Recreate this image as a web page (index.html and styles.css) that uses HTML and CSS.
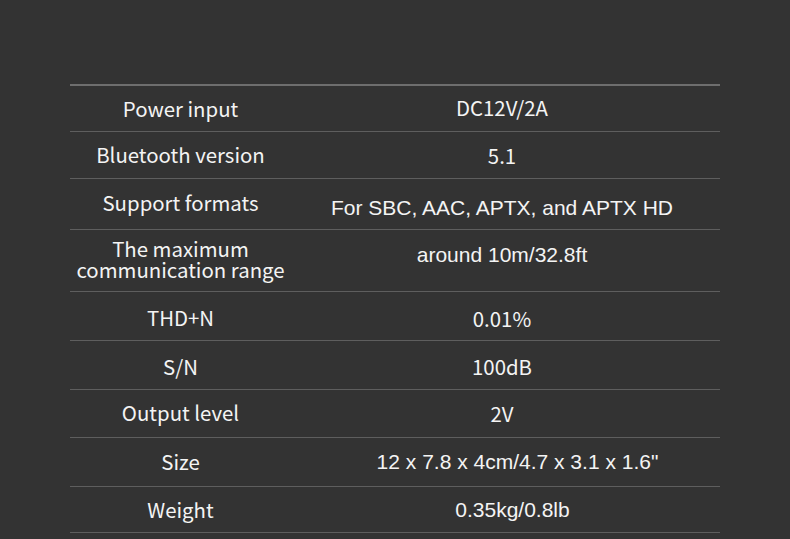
FILE: index.html
```html
<!DOCTYPE html>
<html lang="en">
<head>
<meta charset="utf-8">
<title>Specifications</title>
<link rel="stylesheet" href="styles.css">
</head>
<body>
<div class="spec">
  <div class="row r1"><div class="label">Power input</div><div class="value first">DC12V/2A</div></div>
  <div class="row r2"><div class="label">Bluetooth version</div><div class="value">5.1</div></div>
  <div class="row r3"><div class="label lift">Support formats</div><div class="value arial down">For SBC, AAC, APTX, and APTX HD</div></div>
  <div class="row r4"><div class="label two">The maximum<br>communication range</div><div class="value arial up">around 10m/32.8ft</div></div>
  <div class="row r5"><div class="label sink">THD+N</div><div class="value drop">0.01%</div></div>
  <div class="row r6"><div class="label sink">S/N</div><div class="value drop2">100dB</div></div>
  <div class="row r7"><div class="label raise">Output level</div><div class="value">2V</div></div>
  <div class="row r8"><div class="label">Size</div><div class="value arial shift-lg">12 x 7.8 x 4cm/4.7 x 3.1 x 1.6"</div></div>
  <div class="row r9"><div class="label">Weight</div><div class="value arial shift-sm">0.35kg/0.8lb</div></div>
</div>
</body>
</html>
```
FILE: styles.css
```css
html, body {
  margin: 0;
  padding: 0;
  background: #333333;
}
body {
  width: 790px;
  height: 539px;
  overflow: hidden;
  color: #f4f4f4;
  font-family: "Noto Sans CJK SC", "Noto Sans", sans-serif;
}
.spec {
  margin: 84px 0 0 70px;
  width: 650px;
  border-top: 2px solid #6e6e6e;
}
.row {
  display: grid;
  grid-template-columns: 221px 1fr;
  align-items: center;
  border-bottom: 1px solid #5e5e5e;
  box-sizing: border-box;
}
.r1 { height: 46px; }
.r2 { height: 47px; }
.r3 { height: 51px; }
.r4 { height: 62px; }
.r5 { height: 49px; }
.r6 { height: 49px; }
.r7 { height: 48px; }
.r8 { height: 49px; }
.r9 { height: 46px; }
.label {
  text-align: center;
  font-size: 20.4px;
  line-height: 22px;
  padding-bottom: 2px;
}
.label.two {
  line-height: 21px;
  padding-bottom: 3px;
}
.label.lift { padding-bottom: 5px; }
.label.sink { padding-top: 2px; padding-bottom: 0; }
.label.raise { padding-bottom: 4px; }
.value {
  text-align: center;
  font-size: 20.4px;
  line-height: 22px;
  padding-right: 7px;
  padding-bottom: 1px;
}
.value.first { padding-bottom: 3px; }
.arial {
  font-family: "Liberation Sans", Arial, sans-serif;
  font-size: 21px;
  padding-bottom: 0;
}
.drop { padding-top: 3px; padding-bottom: 0; }
.drop2 { padding-top: 1px; padding-bottom: 0; }
.down { padding-top: 8px; }
.up { padding-bottom: 11px; }
.shift-lg { padding-left: 24px; padding-right: 0; }
.shift-sm { padding-left: 14px; padding-right: 0; }
```
